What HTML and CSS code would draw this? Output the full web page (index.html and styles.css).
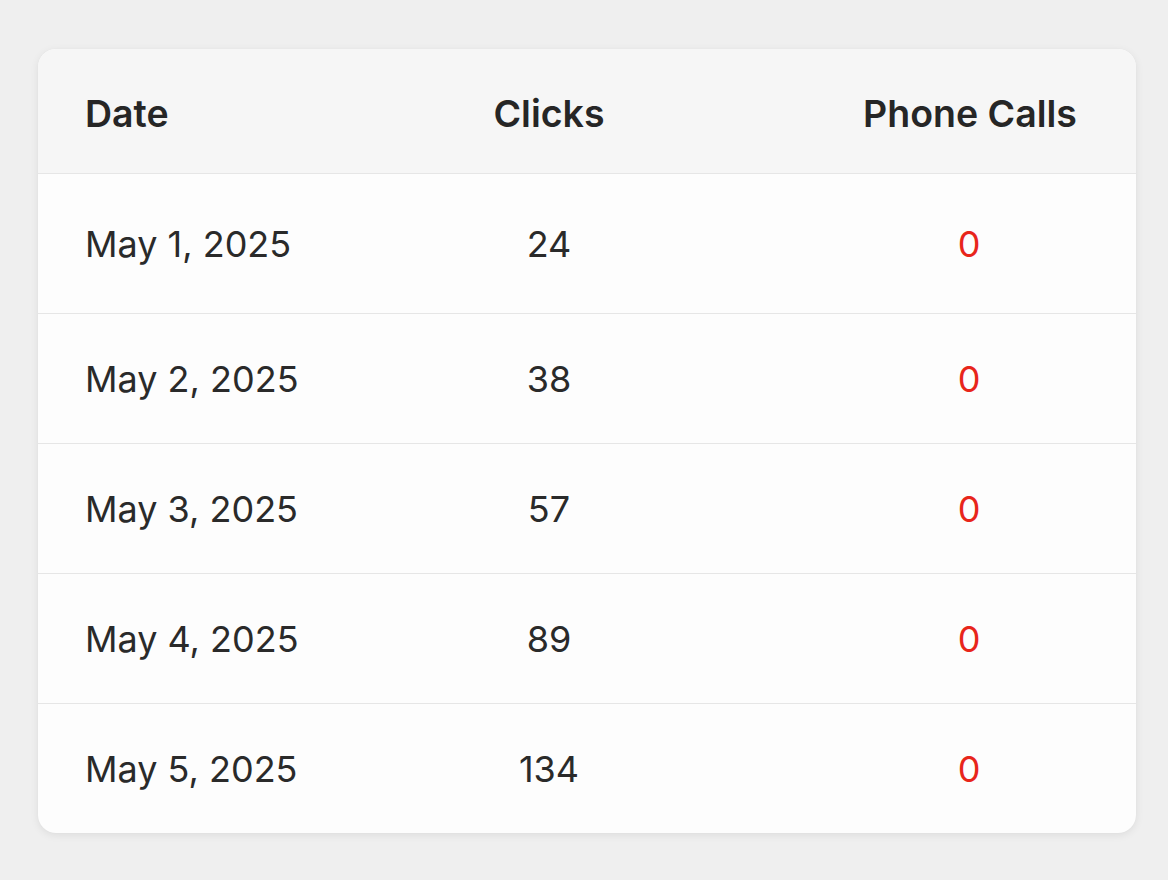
FILE: index.html
```html
<!DOCTYPE html>
<html lang="en">
<head>
<meta charset="utf-8">
<title>Daily stats</title>
<link rel="stylesheet" href="styles.css">
</head>
<body>
<main class="page">
  <section class="card">
    <div class="row head">
      <div class="cell c-date">Date</div>
      <div class="cell c-clicks">Clicks</div>
      <div class="cell c-calls">Phone Calls</div>
    </div>
    <div class="row first">
      <div class="cell c-date">May 1, 2025</div>
      <div class="cell c-clicks">24</div>
      <div class="cell c-calls zero">0</div>
    </div>
    <div class="row">
      <div class="cell c-date">May 2, 2025</div>
      <div class="cell c-clicks">38</div>
      <div class="cell c-calls zero">0</div>
    </div>
    <div class="row">
      <div class="cell c-date">May 3, 2025</div>
      <div class="cell c-clicks">57</div>
      <div class="cell c-calls zero">0</div>
    </div>
    <div class="row">
      <div class="cell c-date">May 4, 2025</div>
      <div class="cell c-clicks">89</div>
      <div class="cell c-calls zero">0</div>
    </div>
    <div class="row last">
      <div class="cell c-date">May 5, 2025</div>
      <div class="cell c-clicks">134</div>
      <div class="cell c-calls zero">0</div>
    </div>
  </section>
</main>
</body>
</html>
```
FILE: styles.css
```css
html, body {
  margin: 0;
  padding: 0;
  background: #efefef;
}
body {
  font-family: Inter, "Noto Sans", "Liberation Sans", sans-serif;
  color: #2a2a2a;
}
.page {
  padding: 49px 32px 46px 38px;
}
.card {
  width: 1098px;
  background: #fdfdfd;
  border-radius: 18px;
  overflow: hidden;
  box-shadow: 0 2px 8px rgba(0, 0, 0, 0.08), 0 0 1px rgba(0, 0, 0, 0.06);
}
.row {
  display: grid;
  grid-template-columns: 314px 300px 1fr;
  align-items: center;
  padding: 0 61px 0 47px;
  height: 129px;
  border-bottom: 1px solid #e6e6e6;
  font-size: 36px;
  letter-spacing: 0;
}
.row.head {
  height: 125px;
  box-sizing: border-box;
  padding-top: 4px;
  background: #f6f6f6;
  font-size: 37.5px;
  font-weight: 600;
  color: #262626;
}
.row.first {
  height: 140px;
  padding-top: 1px;
  box-sizing: border-box;
}
.row.last {
  border-bottom: none;
  height: 129px;
}
.cell {
  white-space: nowrap;
}
.c-clicks {
  text-align: center;
}
.c-calls {
  justify-self: end;
  width: 212px;
  text-align: center;
}
.zero {
  color: #e8251b;
}
```
